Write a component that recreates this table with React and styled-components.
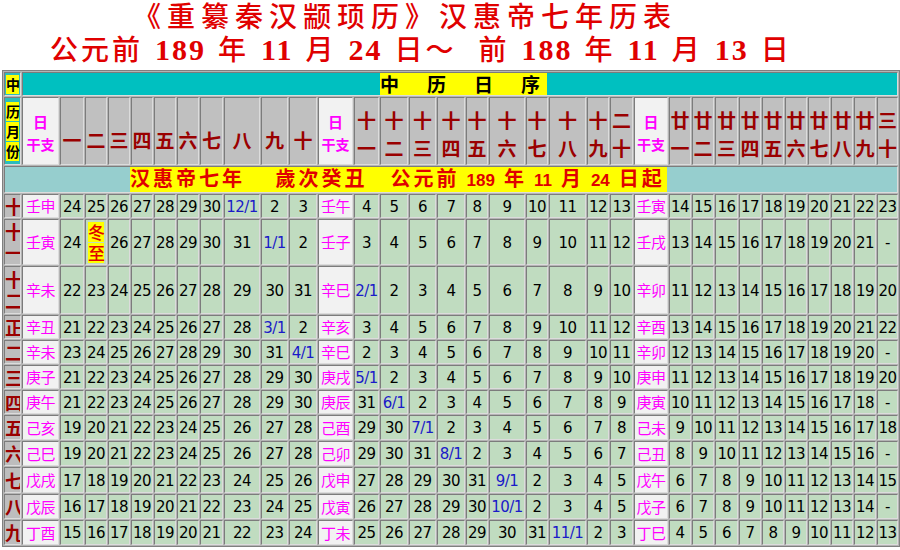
import React from "react";
import styled, { createGlobalStyle } from "styled-components";

const GlobalStyle = createGlobalStyle`
  html, body {
    margin: 0;
    padding: 0;
    background: #ffffff;
  }
  body {
    font-family: "Noto Sans CJK SC", "DejaVu Sans", sans-serif;
  }
`;

const Page = styled.div`
  width: 900px;
  height: 550px;
  overflow: hidden;
`;

const TitleLine = styled.div`
  color: #e00000;
  font-family: "Noto Sans CJK SC", sans-serif;
  font-weight: 500;
  font-size: ${(p) => p.$size}px;
  line-height: ${(p) => p.$lh}px;
  letter-spacing: ${(p) => p.$ls}px;
  padding-left: ${(p) => p.$left}px;
  white-space: nowrap;
`;

const Num = styled.span`
  font-family: "Liberation Serif", serif;
  font-weight: bold;
  font-size: 30px;
  letter-spacing: 2px;
  margin: 0 12px 0 12px;
`;

const Tilde = styled.span`
  margin-right: 22px;
`;

const Table = styled.table`
  margin: 2px 0 0 2px;
  width: 896px;
  table-layout: fixed;
  border-collapse: separate;
  border-spacing: 1px;
  background: #b4b4b4;
  border: 1px solid #808080;
`;

const Row = styled.tr`
  height: ${(p) => p.$h}px;
`;

const Cell = styled.td`
  padding: 0;
  padding-top: ${(p) => p.$pt || 0}px;
  padding-left: ${(p) => p.$pl || 0}px;
  border: 1px solid;
  border-color: #7c7c7c #dcdcdc #dcdcdc #7c7c7c;
  background: ${(p) => p.$bg || "#c0dcc0"};
  color: #000000;
  font-size: 15px;
  line-height: 18px;
  text-align: ${(p) => (p.$left ? "left" : "center")};
  vertical-align: middle;
  overflow: hidden;
  white-space: nowrap;
`;

const Num15 = styled.span`
  font-family: "DejaVu Sans", sans-serif;
  font-size: 15px;
  letter-spacing: -0.5px;
  color: ${(p) => (p.$blue ? "#1a1ac8" : "#000000")};
`;

const GanZhi = styled.span`
  font-family: "Noto Sans CJK SC", sans-serif;
  font-size: 15px;
  color: #ff00ff;
  letter-spacing: -0.5px;
`;

const HeadChar = styled.div`
  font-family: "Noto Sans CJK SC", sans-serif;
  font-weight: bold;
  font-size: 19px;
  line-height: 28px;
  color: #9a0000;
`;

const MonthChar = styled.div`
  font-family: "Noto Sans CJK SC", sans-serif;
  font-weight: bold;
  font-size: 18px;
  line-height: 21px;
  color: #9a0000;
`;

const GzHead = styled.div`
  font-family: "Noto Sans CJK SC", sans-serif;
  font-weight: bold;
  font-size: ${(p) => p.$size}px;
  line-height: 23px;
  color: #ff00ff;
`;

const YellowChar = styled.div`
  background: #ffff00;
  font-family: "Noto Sans CJK SC", sans-serif;
  font-weight: bold;
  font-size: 14px;
  line-height: 19px;
  margin: ${(p) => p.$m || "1px 1px"};
  color: #000000;
`;

const Solar = styled.div`
  background: #ffff00;
  color: #e00000;
  font-family: "Noto Sans CJK SC", sans-serif;
  font-weight: 500;
  font-size: 17px;
  line-height: 20px;
  margin: 1px 2px;
`;

const Banner = styled.div`
  display: block;
  width: max-content;
  background: #ffff00;
  font-family: "Noto Sans CJK SC", sans-serif;
  font-weight: bold;
  font-size: ${(p) => p.$size}px;
  line-height: 22px;
  letter-spacing: ${(p) => p.$ls}px;
  color: ${(p) => p.$color};
  padding-right: 2px;
`;

const BannerNum = styled.span`
  font-family: "Liberation Sans", sans-serif;
  font-weight: bold;
  font-size: 17px;
  letter-spacing: 0;
  margin: 0 9px 0 7px;
`;

const COLS = [17, 37, 24, 22, 22, 22, 22, 22, 23, 36, 27, 28, 35, 25, 28, 27, 28, 22, 36, 22, 37, 22, 23, 34, 22, 22, 23, 22, 22, 22, 22, 22, 22, 21];

const DAY_HEAD = [
  ["一"], ["二"], ["三"], ["四"], ["五"], ["六"], ["七"], ["八"], ["九"], ["十"],
  ["十", "一"], ["十", "二"], ["十", "三"], ["十", "四"], ["十", "五"], ["十", "六"], ["十", "七"], ["十", "八"], ["十", "九"], ["二", "十"],
  ["廿", "一"], ["廿", "二"], ["廿", "三"], ["廿", "四"], ["廿", "五"], ["廿", "六"], ["廿", "七"], ["廿", "八"], ["廿", "九"], ["三", "十"],
];

const s = (str) => str.split(" ");

const MONTHS = [
  { label: ["十"], h: 24, gz: ["壬申", "壬午", "壬寅"], d: s("24 25 26 27 28 29 30 12/1 2 3 4 5 6 7 8 9 10 11 12 13 14 15 16 17 18 19 20 21 22 23") },
  { label: ["十", "一"], h: 46, gz: ["壬寅", "壬子", "壬戌"], d: s("24 冬至 26 27 28 29 30 31 1/1 2 3 4 5 6 7 8 9 10 11 12 13 14 15 16 17 18 19 20 21 -") },
  { label: ["十", "二"], h: 48, gz: ["辛未", "辛巳", "辛卯"], d: s("22 23 24 25 26 27 28 29 30 31 2/1 2 3 4 5 6 7 8 9 10 11 12 13 14 15 16 17 18 19 20") },
  { label: ["正"], h: 24, gz: ["辛丑", "辛亥", "辛酉"], d: s("21 22 23 24 25 26 27 28 3/1 2 3 4 5 6 7 8 9 10 11 12 13 14 15 16 17 18 19 20 21 22") },
  { label: ["二"], h: 24, gz: ["辛未", "辛巳", "辛卯"], d: s("23 24 25 26 27 28 29 30 31 4/1 2 3 4 5 6 7 8 9 10 11 12 13 14 15 16 17 18 19 20 -") },
  { label: ["三"], h: 24, gz: ["庚子", "庚戌", "庚申"], d: s("21 22 23 24 25 26 27 28 29 30 5/1 2 3 4 5 6 7 8 9 10 11 12 13 14 15 16 17 18 19 20") },
  { label: ["四"], h: 24, gz: ["庚午", "庚辰", "庚寅"], d: s("21 22 23 24 25 26 27 28 29 30 31 6/1 2 3 4 5 6 7 8 9 10 11 12 13 14 15 16 17 18 -") },
  { label: ["五"], h: 25, gz: ["己亥", "己酉", "己未"], d: s("19 20 21 22 23 24 25 26 27 28 29 30 7/1 2 3 4 5 6 7 8 9 10 11 12 13 14 15 16 17 18") },
  { label: ["六"], h: 25, gz: ["己巳", "己卯", "己丑"], d: s("19 20 21 22 23 24 25 26 27 28 29 30 31 8/1 2 3 4 5 6 7 8 9 10 11 12 13 14 15 16 -") },
  { label: ["七"], h: 26, gz: ["戊戌", "戊申", "戊午"], d: s("17 18 19 20 21 22 23 24 25 26 27 28 29 30 31 9/1 2 3 4 5 6 7 8 9 10 11 12 13 14 15") },
  { label: ["八"], h: 25, gz: ["戊辰", "戊寅", "戊子"], d: s("16 17 18 19 20 21 22 23 24 25 26 27 28 29 30 10/1 2 3 4 5 6 7 8 9 10 11 12 13 14 -") },
  { label: ["九"], h: 25, gz: ["丁酉", "丁未", "丁巳"], d: s("15 16 17 18 19 20 21 22 23 24 25 26 27 28 29 30 31 11/1 2 3 4 5 6 7 8 9 10 11 12 13") },
];

function DayCell({ value }) {
  if (value === "冬至") {
    return (
      <Cell>
        <Solar>冬</Solar>
        <Solar>至</Solar>
      </Cell>
    );
  }
  return (
    <Cell>
      <Num15 $blue={value.includes("/")}>{value}</Num15>
    </Cell>
  );
}

function MonthRow({ month }) {
  const cells = [];
  for (let part = 0; part < 3; part++) {
    cells.push(
      <Cell key={"gz" + part} $bg="#f2f2f2">
        <GanZhi>{month.gz[part]}</GanZhi>
      </Cell>
    );
    for (let i = 0; i < 10; i++) {
      const v = month.d[part * 10 + i];
      cells.push(<DayCell key={part * 10 + i} value={v} />);
    }
  }
  return (
    <Row $h={month.h}>
      <Cell $bg="#bdbdbd">
        {month.label.map((c, i) => (
          <MonthChar key={i}>{c}</MonthChar>
        ))}
      </Cell>
      {cells}
    </Row>
  );
}

function HeaderRow() {
  const cells = [];
  for (let part = 0; part < 3; part++) {
    cells.push(
      <Cell key={"gzh" + part} $bg="#f2f2f2" $pt={4}>
        <GzHead $size={15}>日</GzHead>
        <GzHead $size={14}>干支</GzHead>
      </Cell>
    );
    for (let i = 0; i < 10; i++) {
      const chars = DAY_HEAD[part * 10 + i];
      cells.push(
        <Cell key={"dh" + part + i} $bg="#c0c0c0" $pt={chars.length === 1 ? 18 : 6}>
          {chars.map((c, j) => (
            <HeadChar key={j}>{c}</HeadChar>
          ))}
        </Cell>
      );
    }
  }
  return (
    <Row $h={68}>
      <Cell $bg="#2cbcbc">
        <YellowChar>历</YellowChar>
        <YellowChar>月</YellowChar>
        <YellowChar>份</YellowChar>
      </Cell>
      {cells}
    </Row>
  );
}

export default function App() {
  return (
    <Page>
      <GlobalStyle />
      <TitleLine $size={28} $lh={30} $ls={6} $left={133}>
        《重纂秦汉颛顼历》汉惠帝七年历表
      </TitleLine>
      <TitleLine $size={28} $lh={36} $ls={3} $left={50}>
        公元前<Num>189</Num>年<Num>11</Num>月<Num>24</Num>日<Tilde>～</Tilde>前<Num>188</Num>年<Num>11</Num>月<Num>13</Num>日
      </TitleLine>
      <Table>
        <colgroup>
          {COLS.map((w, i) => (
            <col key={i} style={{ width: w }} />
          ))}
        </colgroup>
        <tbody>
          <Row $h={24}>
            <Cell $bg="#2cbcbc">
              <YellowChar $m="0 1px">中</YellowChar>
            </Cell>
            <Cell colSpan={33} $bg="#00c0c0" $left $pl={357}>
              <Banner $size={19} $ls={4.5} $color="#000000">中　历　日　序</Banner>
            </Cell>
          </Row>
          <HeaderRow />
          <Row $h={24}>
            <Cell colSpan={34} $bg="#96cece" $left $pl={125}>
              <Banner $size={20} $ls={3} $color="#e00000">
                汉惠帝七年　 歲次癸丑　公元前<BannerNum>189</BannerNum>年<BannerNum>11</BannerNum>月<BannerNum>24</BannerNum>日起
              </Banner>
            </Cell>
          </Row>
          {MONTHS.map((m, i) => (
            <MonthRow key={i} month={m} />
          ))}
        </tbody>
      </Table>
    </Page>
  );
}
